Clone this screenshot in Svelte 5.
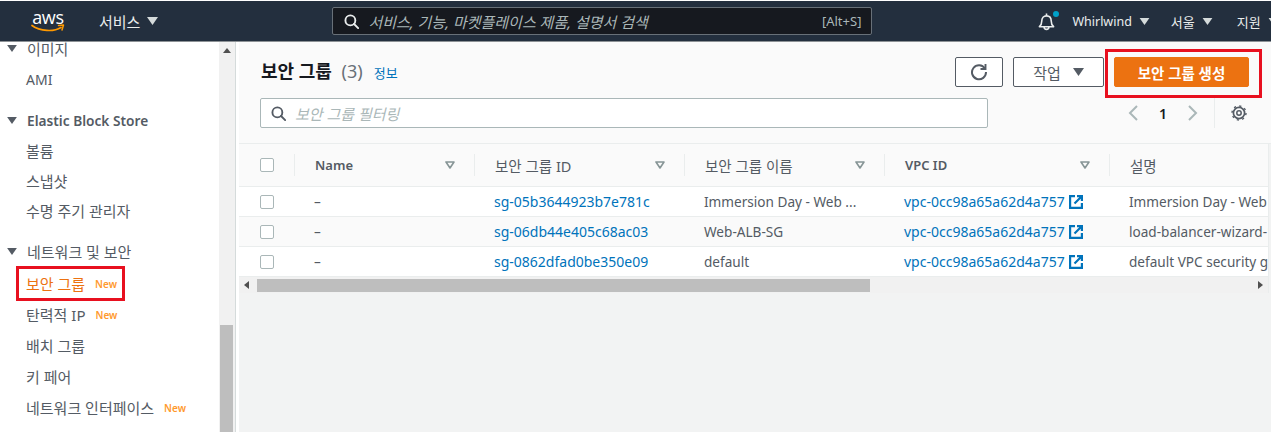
<script>
const nav = [
  { title: '이미지', items: [{ label: 'AMI', latin: true }] },
  { title: 'Elastic Block Store', bold: true, items: [{ label: '볼륨' }, { label: '스냅샷' }, { label: '수명 주기 관리자' }] },
  {
    title: '네트워크 및 보안',
    items: [
      { label: '보안 그룹', isNew: true, active: true },
      { label: '탄력적 IP', isNew: true },
      { label: '배치 그룹' },
      { label: '키 페어' },
      { label: '네트워크 인터페이스', isNew: true }
    ]
  }
];

const columns = [
  { label: 'Name', bold: true },
  { label: '보안 그룹 ID' },
  { label: '보안 그룹 이름' },
  { label: 'VPC ID', bold: true },
  { label: '설명', noSort: true }
];

const rows = [
  { id: 'sg-05b3644923b7e781c', name: 'Immersion Day - Web ...', desc: 'Immersion Day - Web' },
  { id: 'sg-06db44e405c68ac03', name: 'Web-ALB-SG', desc: 'load-balancer-wizard-1' },
  { id: 'sg-0862dfad0be350e09', name: 'default', desc: 'default VPC security group' }
];

const vpc = 'vpc-0cc98a65a62d4a757';
</script>

{#snippet caret(cls)}
  <svg class={cls} viewBox="0 0 14 10"><path d="M0 0h14L7 10z" fill="currentColor" /></svg>
{/snippet}

{#snippet search()}
  <svg class="search-icon" viewBox="0 0 16 16" fill="none" stroke="currentColor" stroke-width="2">
    <circle cx="6.8" cy="6.8" r="5.3" />
    <path d="M10.7 10.7l4.4 4.4" stroke-linecap="round" />
  </svg>
{/snippet}

<div class="page">
  <header class="topbar">
    <div class="logo">
      <span class="logo-text">aws</span>
      <svg class="smile" viewBox="0 0 34 9" fill="none">
        <path d="M1 1.5C9 7.5 23 8 30 3.5" stroke="#f90" stroke-width="1.7" stroke-linecap="round" />
        <path d="M27.5 1.5l5-.5-1.500 5" stroke="#f90" stroke-width="1.5" stroke-linecap="round" stroke-linejoin="round" />
      </svg>
    </div>
    <span class="top-link services">서비스 {@render caret('top-caret')}</span>
    <div class="top-search">
      {@render search()}
      <span class="top-search-text">서비스, 기능, 마켓플레이스 제품, 설명서 검색</span>
      <span class="shortcut">[Alt+S]</span>
    </div>
    <div class="bell">
      <svg viewBox="0 0 18 20" fill="none" stroke="#eaeded" stroke-width="1.7">
        <path d="M1.500 15.500c1.800-1.500 2.500-3 2.500-6C4 6.200 6 4 9 4s5 2.200 5 5.500c0 3 .7 4.500 2.500 6z" stroke-linejoin="round" />
        <path d="M6.500 15.800a2.500 2.500 0 0 0 5 0" />
        <path d="M9 1.500v2.500" />
      </svg>
      <span class="dot"></span>
    </div>
    <span class="top-link whirlwind">Whirlwind {@render caret('top-caret small')}</span>
    <span class="top-link seoul">서울 {@render caret('top-caret small')}</span>
    <span class="top-link support">지원 {@render caret('top-caret small')}</span>
  </header>

  <div class="body">
    <aside class="sidebar">
      <nav class="nav">
        {#each nav as group}
          <div class="group">
            <div class="group-title" class:bold={group.bold}>
              {@render caret('group-caret')}
              <span>{group.title}</span>
            </div>
            {#each group.items as item}
              <div class="nav-row" class:latin={item.latin}>
                {#if item.active}
                  <span class="redbox-nav">
                    <span class="nav-item active">{item.label}</span>
                    <span class="new">New</span>
                  </span>
                {:else}
                  <span class="nav-item">{item.label}</span>
                  {#if item.isNew}<span class="new">New</span>{/if}
                {/if}
              </div>
            {/each}
          </div>
        {/each}
      </nav>
      <div class="side-scroll">
        <svg class="side-up" viewBox="0 0 8 5"><path d="M0 5h8L4 0z" fill="#505050" /></svg>
        <div class="side-thumb"></div>
      </div>
    </aside>

    <main class="main">
      <section class="panel-head">
        <div class="head-top">
          <h1>보안 그룹 <span class="count">(3)</span></h1>
          <span class="info">정보</span>
          <div class="actions">
            <button class="btn icon-btn" aria-label="새로 고침">
              <svg viewBox="0 0 18 18" fill="none" stroke="#545b64" stroke-width="2">
                <path d="M14.900 5.500A7 7 0 1 0 16 9" />
                <path d="M15.500 1v5h-5" stroke-width="1.900" />
              </svg>
            </button>
            <button class="btn work">작업 {@render caret('work-caret')}</button>
            <div class="redbox-btn">
              <button class="btn primary">보안 그룹 생성</button>
            </div>
          </div>
        </div>
        <div class="head-bottom">
          <div class="filter">
            {@render search()}
            <span class="filter-text">보안 그룹 필터링</span>
          </div>
          <div class="pager">
            <svg class="chev" viewBox="0 0 12 18" fill="none" stroke="#aab7b8" stroke-width="2"><path d="M10 2L3 9l7 7" /></svg>
            <span class="page-no">1</span>
            <svg class="chev" viewBox="0 0 12 18" fill="none" stroke="#aab7b8" stroke-width="2"><path d="M2 2l7 7-7 7" /></svg>
          </div>
          <div class="settings">
            <svg viewBox="0 0 16 16" fill="none" stroke="#545b64">
              <circle cx="8" cy="8" r="5.600" stroke-width="1.700" />
              <circle cx="8" cy="8" r="7" stroke-width="1.400" stroke-dasharray="2.200 3.300" />
              <circle cx="8" cy="8" r="2.200" stroke-width="1.500" />
            </svg>
          </div>
        </div>
      </section>

      <section class="table">
        <div class="row thead">
          <div class="check-cell"><span class="check"></span></div>
          {#each columns as col}
            <div class="th" class:bold={col.bold}>
              <span>{col.label}</span>
              {#if !col.noSort}
                <svg class="sort" viewBox="0 0 10 8" fill="none" stroke="#879596" stroke-width="1.600"><path d="M1 1h8L5 7z" stroke-linejoin="round" /></svg>
              {/if}
            </div>
          {/each}
        </div>
        {#each rows as r, i}
          <div class="row tr" class:odd={i === 1}>
            <div class="check-cell"><span class="check"></span></div>
            <div class="td">–</div>
            <div class="td link">{r.id}</div>
            <div class="td">{r.name}</div>
            <div class="td link">
              {vpc}
              <svg class="ext" viewBox="0 0 14 14" fill="none" stroke="#0073bb" stroke-width="2.200">
                <path d="M6 1.100H1.100v11.800h11.800V8" />
                <path d="M5.500 8.500L12 2M8 1.100h4.900V6" />
              </svg>
            </div>
            <div class="td">{r.desc}</div>
          </div>
        {/each}
        <div class="hscroll">
          <svg class="arrow" viewBox="0 0 5 8"><path d="M5 0v8L0 4z" fill="#505050" /></svg>
          <div class="hthumb"></div>
          <svg class="arrow right" viewBox="0 0 5 8"><path d="M0 0v8l5-4z" fill="#505050" /></svg>
        </div>
      </section>
    </main>
  </div>
</div>

<style>
:global(body) {
  margin: 0;
  overflow: hidden;
}

.page {
  width: 1271px;
  height: 432px;
  overflow: hidden;
  display: flex;
  flex-direction: column;
  font-family: "Noto Sans", "Noto Sans CJK KR", sans-serif;
  font-size: 14px;
  color: #545b64;
  background: #fff;
}

/* top bar */
.topbar {
  flex: none;
  height: 40px;
  margin-top: 1px;
  border-bottom: 1px solid #8d9296;
  background: #232f3e;
  display: flex;
  align-items: center;
  color: #eaeded;
  overflow: hidden;
}

.logo {
  width: 34px;
  flex: none;
  margin-left: 31px;
  display: flex;
  flex-direction: column;
  align-items: center;
}

.logo-text {
  font-family: "Open Sans", sans-serif;
  font-size: 18px;
  line-height: 14px;
  color: #fff;
  letter-spacing: -.3px;
}

.smile {
  width: 34px;
  height: 9px;
}

.top-link {
  flex: none;
  font-size: 13px;
  display: flex;
  align-items: center;
  gap: 7px;
  white-space: nowrap;
}

.services {
  margin-left: 34px;
  font-size: 15px;
}

.top-caret {
  width: 11px;
  height: 8px;
  color: #d5dbdb;
}

:global(.top-caret.small) {
  width: 11px;
  height: 7px;
}

.top-search {
  flex: none;
  width: 540px;
  height: 28px;
  margin-left: 174px;
  box-sizing: border-box;
  border: 1px solid #687078;
  border-radius: 2px;
  background: #16191f;
  display: flex;
  align-items: center;
  padding: 0 10px 0 11px;
}

.search-icon {
  width: 15px;
  height: 15px;
  flex: none;
}

.top-search-text {
  margin-left: 9px;
  font-style: italic;
  font-size: 15px;
  color: #aab7b8;
  flex: 1;
  white-space: nowrap;
}

.shortcut {
  font-size: 13px;
  color: #aab7b8;
}

.bell {
  position: relative;
  flex: none;
  width: 17px;
  height: 19px;
  margin-left: 166px;
}

.bell svg {
  width: 17px;
  height: 19px;
  display: block;
}

.dot {
  position: absolute;
  top: -1px;
  right: -4px;
  width: 6px;
  height: 6px;
  border-radius: 50%;
  background: #00a1c9;
}

.whirlwind {
  margin-left: 17px;
  font-size: 12.5px;
}

.seoul {
  margin-left: 21px;
}

.support {
  margin-left: 24px;
}

/* sidebar */
.body {
  flex: 1;
  min-height: 0;
  display: flex;
}

.sidebar {
  flex: none;
  width: 235px;
  display: flex;
  border-right: 1px solid #d5dbdb;
  overflow: hidden;
}

.nav {
  width: 219px;
  flex: none;
  margin-top: -9px;
}

.group {
  margin-bottom: 11px;
}

.group-title {
  height: 30px;
  display: flex;
  align-items: center;
  padding-left: 7px;
  gap: 10px;
  font-size: 15px;
}

.group:first-child .group-title {
  height: 31px;
}

.group-title.bold {
  font-weight: 600;
  font-size: 13.7px;
}

.group-caret {
  width: 10px;
  height: 7px;
  color: #545b64;
  flex: none;
}

.nav-row {
  height: 30px;
  padding-left: 26px;
  display: flex;
  align-items: center;
  gap: 10px;
  font-size: 15px;
  white-space: nowrap;
}

.nav-row.latin {
  font-size: 14px;
}

.group:last-child .nav-row {
  height: 31px;
}

.group:last-child .group-title {
  height: 31.5px;
}

.new {
  font-size: 10px;
  font-weight: 600;
  color: #ff9a2e;
  margin-top: 2px;
}

.redbox-nav {
  margin-left: -10px;
  border: 3px solid #e8101f;
  padding: 0 5px 0 7px;
  height: 29px;
  width: 91px;
  display: flex;
  align-items: center;
  gap: 10px;
}

.active {
  color: #ec7211;
}

.side-scroll {
  flex: none;
  width: 16px;
  background: #f1f1f1;
  position: relative;
  display: flex;
  flex-direction: column;
  align-items: center;
}

.side-up {
  width: 8px;
  height: 5px;
  margin-top: 6px;
}

.side-thumb {
  position: absolute;
  top: 283px;
  left: 1px;
  width: 13px;
  height: 110px;
  background: #bebebe;
}

/* main */
.main {
  flex: 1;
  min-width: 0;
  margin-left: 3px;
  background: #f2f3f3;
}

.panel-head {
  height: 102px;
  box-sizing: border-box;
  background: #fafafa;
  border-bottom: 1px solid #eaeded;
  padding: 7px 0 0 21px;
}

.head-top {
  display: flex;
  align-items: flex-start;
}

h1 {
  margin: 9px 0 0 1px;
  font-size: 18px;
  line-height: 26px;
  font-weight: 600;
  color: #16191f;
}

.count {
  font-weight: 400;
  color: #687078;
  margin-left: 5px;
}

.info {
  margin: 15px 0 0 11px;
  font-size: 13px;
  line-height: 18px;
  color: #0073bb;
}

.actions {
  margin-left: auto;
  display: flex;
  align-items: flex-start;
}

.btn {
  font-family: inherit;
  height: 30px;
  margin-top: 8px;
  border: 1px solid #545b64;
  border-radius: 2px;
  background: #fff;
  color: #545b64;
  font-size: 15px;
  font-weight: 600;
  padding: 0;
  display: flex;
  align-items: center;
  justify-content: center;
}

.icon-btn {
  width: 48px;
}

.icon-btn svg {
  width: 18px;
  height: 18px;
}

.work {
  width: 91px;
  margin-left: 10px;
  gap: 12px;
  font-weight: 400;
}

.work-caret {
  width: 11px;
  height: 8px;
  color: #545b64;
}

.redbox-btn {
  width: 157px;
  height: 49px;
  box-sizing: border-box;
  border: 3px solid #e8101f;
  padding: 5px 0 0 6px;
  margin-left: 1px;
  margin-right: 9px;
}

.primary {
  margin-top: 0;
  width: 135px;
  border-color: #ec7211;
  background: #ec7211;
  color: #fff;
  font-size: 14.5px;
}

.head-bottom {
  display: flex;
  align-items: center;
}

.filter {
  width: 728px;
  height: 30px;
  box-sizing: border-box;
  border: 1px solid #aab7b8;
  border-radius: 2px;
  background: #fff;
  display: flex;
  align-items: center;
  padding-left: 10px;
  color: #545b64;
}

.filter-text {
  margin-left: 9px;
  font-style: italic;
  font-size: 15px;
  color: #aab7b8;
}

.pager {
  margin-left: 139px;
  display: flex;
  align-items: center;
  gap: 20px;
}

.chev {
  width: 12px;
  height: 18px;
}

.page-no {
  font-weight: 600;
  color: #16191f;
  font-size: 14px;
}

.settings {
  margin-left: 15px;
  height: 30px;
  border-left: 1px solid #eaeded;
  padding-left: 16px;
  display: flex;
  align-items: center;
}

.settings svg {
  width: 16px;
  height: 16px;
}

/* table */
.table {
  border-right: 1px solid #eaeded;
  width: 1030px;
  box-sizing: border-box;
  overflow: hidden;
}

.row {
  display: grid;
  grid-template-columns: 55px 180px 210px 200px 225px 161px;
}

.thead {
  height: 43px;
  background: #fafafa;
  border-bottom: 1px solid #eaeded;
  box-sizing: border-box;
  align-items: center;
}

.check-cell {
  display: flex;
  padding-left: 21px;
  align-items: center;
}

.check {
  width: 14px;
  height: 14px;
  box-sizing: border-box;
  border: 1px solid #aab7b8;
  border-radius: 2px;
  background: #fff;
}

.th {
  height: 22px;
  border-left: 1px solid #eaeded;
  padding: 0 19px 0 20px;
  display: flex;
  align-items: center;
  justify-content: space-between;
  font-size: 14.5px;
  white-space: nowrap;
}

.th.bold {
  font-weight: 600;
  font-size: 13px;
}

.sort {
  width: 10px;
  height: 8px;
  flex: none;
}

.tr {
  height: 30px;
  box-sizing: border-box;
  background: #fff;
  border-bottom: 1px solid #eaeded;
  align-items: center;
}

.tr.odd {
  background: #fafafa;
}

.td {
  padding-left: 20px;
  white-space: nowrap;
  font-size: 13.6px;
  display: flex;
  align-items: center;
}

.link {
  color: #0073bb;
  font-size: 14px;
}

.ext {
  width: 14px;
  height: 14px;
  margin-left: 4px;
}

.hscroll {
  height: 16px;
  background: #f1f1f1;
  display: flex;
  align-items: center;
  padding: 0 5px;
}

.arrow {
  width: 5px;
  height: 8px;
  flex: none;
}

.hthumb {
  width: 613px;
  height: 13px;
  margin-left: 8px;
  background: #bebebe;
}

.right {
  margin-left: auto;
}
</style>
